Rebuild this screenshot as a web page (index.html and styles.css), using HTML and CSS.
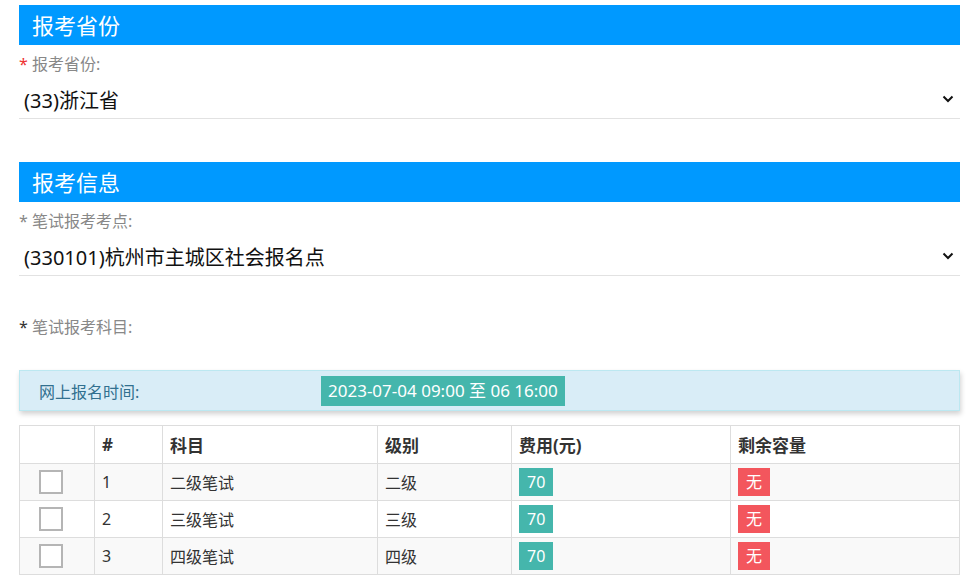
FILE: index.html
```html
<!DOCTYPE html>
<html lang="zh-CN">
<head>
<meta charset="utf-8">
<title>报考</title>
<link rel="stylesheet" href="styles.css">
</head>
<body>
<div class="page">
  <div class="section-title">报考省份</div>
  <div class="field">
    <div class="label"><span class="req">*</span> 报考省份:</div>
    <div class="select">
      <span>(33)浙江省</span>
      <svg class="chev" width="12" height="8" viewBox="0 0 12 8"><path d="M1.5 1.5 L6 6 L10.5 1.5" fill="none" stroke="#111" stroke-width="2"/></svg>
    </div>
  </div>

  <div class="section-title second">报考信息</div>
  <div class="field">
    <div class="label">* 笔试报考考点:</div>
    <div class="select">
      <span>(330101)杭州市主城区社会报名点</span>
      <svg class="chev" width="12" height="8" viewBox="0 0 12 8"><path d="M1.5 1.5 L6 6 L10.5 1.5" fill="none" stroke="#111" stroke-width="2"/></svg>
    </div>
  </div>

  <div class="label subject"><span class="dark">*</span> 笔试报考科目:</div>

  <div class="info">
    <div class="info-label">网上报名时间:</div>
    <div class="info-badge">2023-07-04 09:00 至 06 16:00</div>
  </div>

  <table class="grid">
    <colgroup>
      <col style="width:75px"><col style="width:68px"><col style="width:215px"><col style="width:134px"><col style="width:219px"><col style="width:229px">
    </colgroup>
    <thead>
      <tr><th></th><th>#</th><th>科目</th><th>级别</th><th>费用(元)</th><th>剩余容量</th></tr>
    </thead>
    <tbody>
      <tr><td class="cb-cell"><span class="cb"></span></td><td>1</td><td>二级笔试</td><td>二级</td><td><span class="tag teal">70</span></td><td><span class="tag red">无</span></td></tr>
      <tr><td class="cb-cell"><span class="cb"></span></td><td>2</td><td>三级笔试</td><td>三级</td><td><span class="tag teal">70</span></td><td><span class="tag red">无</span></td></tr>
      <tr><td class="cb-cell"><span class="cb"></span></td><td>3</td><td>四级笔试</td><td>四级</td><td><span class="tag teal">70</span></td><td><span class="tag red">无</span></td></tr>
    </tbody>
  </table>
</div>
</body>
</html>
```

FILE: styles.css
```css
html, body {
  margin: 0;
  padding: 0;
  background: #fff;
}
body {
  font-family: "Noto Sans", "Noto Sans CJK SC", sans-serif;
  color: #333;
}
.page {
  width: 941px;
  margin-left: 19px;
  padding-top: 5px;
}
.section-title {
  height: 40px;
  line-height: 40px;
  background: #0099ff;
  color: #fff;
  font-size: 22px;
  padding-left: 13px;
}
.section-title.second {
  margin-top: 43px;
}
.field {
  padding-top: 9px;
}
.label {
  font-size: 16px;
  line-height: 20px;
  color: #888;
}
.req {
  color: #e33;
}
.dark {
  color: #333;
}
.select {
  display: flex;
  align-items: center;
  justify-content: space-between;
  height: 39px;
  padding: 0 6px 0 5px;
  border-bottom: 1px solid #e2e2e2;
  font-size: 20px;
  color: #111;
  margin-top: 5px;
}
.select span {
  padding-top: 2px;
}
.chev {
  display: block;
}
.subject {
  margin-top: 41px;
}
.info {
  margin-top: 33px;
  height: 39px;
  background: #d9edf7;
  border: 1px solid #bce8f1;
  box-shadow: 1px 3px 5px rgba(0, 0, 0, 0.18);
  display: flex;
  align-items: center;
}
.info-label {
  width: 282px;
  padding-left: 19px;
  font-size: 16px;
  color: #31708f;
}
.info-badge {
  height: 30px;
  line-height: 30px;
  padding: 0 7px;
  background: #45b6ac;
  color: #fff;
  font-size: 17px;
}
.grid {
  margin-top: 14px;
  width: 941px;
  border-collapse: collapse;
  table-layout: fixed;
}
.grid th, .grid td {
  border: 1px solid #ddd;
  text-align: left;
  padding: 0 7px;
}
.grid th {
  height: 37px;
  font-size: 17px;
  font-weight: bold;
  color: #333;
}
.grid td {
  height: 36px;
  font-size: 16px;
  color: #333;
}
.grid tbody tr:nth-child(odd) td {
  background: #f9f9f9;
}
.cb {
  display: block;
  width: 20px;
  height: 20px;
  border: 2px solid #b5b5b5;
  background: #fff;
  margin-left: 12px;
}
.tag {
  display: inline-block;
  height: 28px;
  line-height: 28px;
  padding: 0 8px;
  color: #fff;
  font-size: 16px;
  vertical-align: middle;
}
.teal {
  background: #45b6ac;
}
.red {
  background: #f3565d;
}
```
